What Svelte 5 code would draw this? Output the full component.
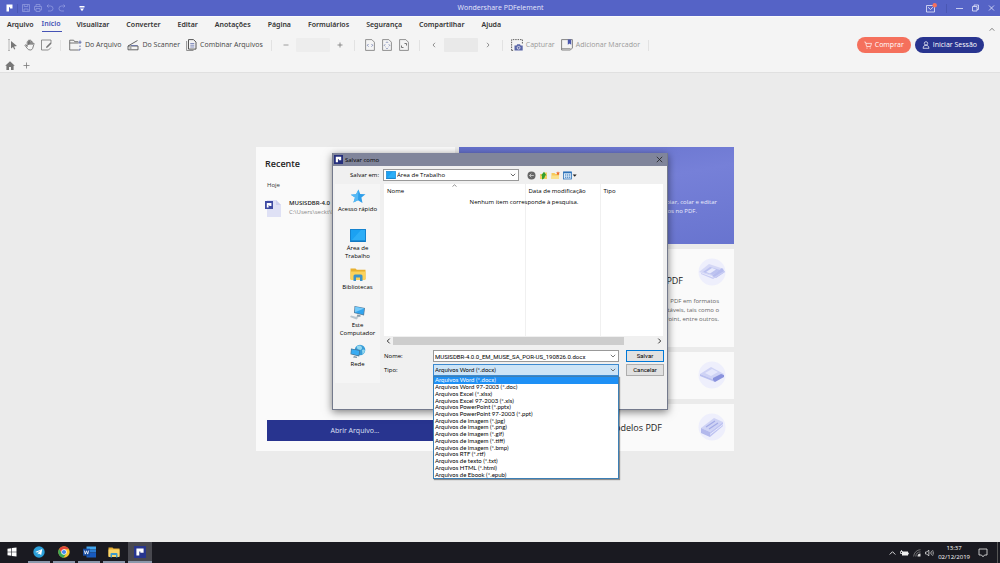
<script>
  const menus = ['Visualizar', 'Converter', 'Editar', 'Anotações', 'Página', 'Formulários', 'Segurança', 'Compartilhar', 'Ajuda'];
  const types = [
    'Arquivos Word (*.docx)',
    'Arquivos Word 97-2003 (*.doc)',
    'Arquivos Excel (*.xlsx)',
    'Arquivos Excel 97-2003 (*.xls)',
    'Arquivos PowerPoint (*.pptx)',
    'Arquivos PowerPoint 97-2003 (*.ppt)',
    'Arquivos de imagem (*.jpg)',
    'Arquivos de imagem (*.png)',
    'Arquivos de imagem (*.gif)',
    'Arquivos de imagem (*.tiff)',
    'Arquivos de imagem (*.bmp)',
    'Arquivos RTF (*.rtf)',
    'Arquivos de texto (*.txt)',
    'Arquivos HTML (*.html)',
    'Arquivos de Ebook (*.epub)'
  ];
  let selected = $state(types[0]);
  let fileName = $state('MUSISDBR-4.0.0_EM_MUSE_SA_POR-US_190826.0.docx');
</script>

{#snippet logo(size, bg)}
  <svg width={size} height={size} viewBox="0 0 10 10" aria-hidden="true">
    <rect width="10" height="10" fill={bg} />
    <path d="M2 2h6v3.700H5.300V4.500H4.400V8H2z" fill="#fff" />
  </svg>
{/snippet}

{#snippet desktop(w, h)}
  <svg width={w} height={h} viewBox="0 0 16 13" aria-hidden="true">
    <rect x=".5" y=".5" width="15" height="12" fill="#1ba1f2" stroke="#1583cf" />
    <path d="M1 12L11 1h4v11z" fill="#35b4fa" opacity=".7" />
    <path d="M1 12h14" stroke="#0c6fb5" />
  </svg>
{/snippet}

<div class="app">
  <header class="titlebar">
    <div class="quick">
      <svg width="7" height="8" viewBox="0 0 7 8" aria-hidden="true"><path d="M.5.5h6v4H4V3.300H3v4.200H.5z" fill="#fff" /></svg>
      <span class="tsep"></span>
      <button aria-label="Salvar arquivo"><svg width="8" height="8" viewBox="0 0 8 8"><path d="M.5.5h7v7h-7zM2.200.5v2h3.600v-2M2 7.500V5h4v2.500" /></svg></button>
      <button aria-label="Imprimir"><svg width="8" height="8" viewBox="0 0 8 8"><path d="M2 2.500v-2h4v2M2 6H.5V2.500h7V6H6M2 4.500h4v3H2z" /></svg></button>
      <button aria-label="Desfazer"><svg width="8" height="8" viewBox="0 0 8 8"><path d="M2.500.5l-1.500 1.500 1.500 1.500M1 2h3.500a2.500 2.500 0 010 5H2" /></svg></button>
      <button aria-label="Refazer"><svg width="8" height="8" viewBox="0 0 8 8"><path d="M5.500.5L7 2 5.500 3.500M7 2H3.500a2.500 2.500 0 000 5H6" /></svg></button>
      <button class="bright" aria-label="Personalizar"><svg width="6" height="7" viewBox="0 0 6 7"><path d="M.5 1h5v1.500h-5zM1 3.500h4L3 6.200z" fill="#fff" stroke="none" /></svg></button>
    </div>
    <h1>Wondershare PDFelement</h1>
    <div class="winctl">
      <button aria-label="Mensagens"><svg width="11" height="10" viewBox="0 0 11 10"><path d="M.5 2.500h8v6.500h-8zM2 4.200l2.500 2.300L7 4.200" /><circle cx="8.700" cy="2.300" r="2.200" fill="#f5705c" stroke="none" /></svg></button>
      <span class="tsep"></span>
      <button aria-label="Minimizar"><svg width="7" height="8" viewBox="0 0 7 8"><path d="M0 4.500h7" /></svg></button>
      <button aria-label="Restaurar"><svg width="7" height="8" viewBox="0 0 7 8"><path d="M.5 2.500h4.500V7H.5zM2 2.500V1h4.500v4.500H5" /></svg></button>
      <button aria-label="Fechar"><svg width="7" height="8" viewBox="0 0 7 8"><path d="M1 1.500l5 5M6 1.500l-5 5" /></svg></button>
    </div>
  </header>

  <nav class="menu">
    <a class="first" href="#arquivo">Arquivo</a>
    <a class="active" href="#inicio">Início</a>
    {#each menus as m}
      <a href="#{m}">{m}</a>
    {/each}
    <button class="collapse" aria-label="Recolher faixa"><svg width="6" height="5" viewBox="0 0 6 5"><path d="M.7 3.700L3 1.300l2.300 2.400" fill="none" stroke="#666" stroke-width=".8" /></svg></button>
  </nav>

  <div class="ribbon">
    <div class="tools">
      <button aria-label="Selecionar"><svg width="11" height="12" viewBox="0 0 11 12"><path d="M1 .5h2M2 .5v11M1 11.500h2" stroke="#aaa" stroke-width=".8" /><path d="M4 2l6 5-3 .4 1.300 2.600-1.100.5L6 7.900 4 9.500z" fill="#777" /></svg></button>
      <button aria-label="Mão"><svg width="11" height="12" viewBox="0 0 11 12"><path d="M3.200 7.500V2.800q.6-.8 1.200 0V6M4.400 5.500V1.300q.7-.8 1.300 0v4.200M5.700 5.500V1.600q.7-.8 1.300 0v4M7 5.500V2.700q.7-.7 1.300 0v2.800l.9-1.300q.9-.4.9.6L8.600 9.500q-.6 1.500-2.300 1.500-2 0-3-1.500L1 6.400q.3-1.100 1.200-.4l1 1.500" stroke="#666" stroke-width=".8" /></svg></button>
      <button aria-label="Editar"><svg width="11" height="12" viewBox="0 0 11 12"><path d="M10 4V1H.5v10h7l2.500-2.500" stroke="#777" stroke-width=".8" /><path d="M5 9l.4-1.600 4-4 1.200 1.200-4 4z" fill="#777" /></svg></button>
    </div>
    <span class="sep"></span>
    <div class="tools">
      <button class="lbl"><svg width="13" height="12" viewBox="0 0 13 12"><path d="M9.500 11H.7V1.200h4l1 1.500h3.500M.7 4h9" stroke="#555" stroke-width=".8" /><path d="M11 11V9.500M11 8V6.500M9.500 11h1.500M11 1.500v3.500M9.500 3.200h3" stroke="#5563a6" stroke-width=".9" /></svg>Do Arquivo</button>
      <button class="lbl"><svg width="12" height="12" viewBox="0 0 12 12"><path d="M1 7L10.500 1.500M1 7h10v3.800H1zM2.500 9h2" stroke="#555" stroke-width=".9" /><path d="M4 6.500h6.500" stroke="#5563a6" stroke-width=".7" /></svg>Do Scanner</button>
      <button class="lbl"><svg width="11" height="12" viewBox="0 0 11 12"><path d="M7.500 11.500H.6V2" stroke="#777" stroke-width=".8" /><path d="M2.500.6h5l2.500 2.500v7h-7.500z" stroke="#444" stroke-width=".9" /><path d="M4.300 4.500h4M4.300 6.200h4M4.300 8h4" stroke="#5563a6" stroke-width=".7" /></svg>Combinar Arquivos</button>
    </div>
    <span class="sep"></span>
    <div class="tools range">
      <button aria-label="Reduzir"><svg width="6" height="6" viewBox="0 0 6 6"><path d="M.5 3h5" stroke="#888" stroke-width=".8" /></svg></button>
      <select class="box" aria-label="Zoom" disabled><option></option></select>
      <button aria-label="Ampliar"><svg width="6" height="6" viewBox="0 0 6 6"><path d="M.5 3h5M3 .5v5" stroke="#777" stroke-width=".8" /></svg></button>
    </div>
    <span class="sep"></span>
    <div class="tools pages">
      <button aria-label="Ajustar largura"><svg width="10" height="12" viewBox="0 0 10 12"><path d="M.6.6h6.200l2.600 2.600v8.200H.6z" stroke="#777" stroke-width=".8" /><path d="M3.500 5L2.300 6.300l1.200 1.300M6.500 5l1.200 1.300-1.200 1.300" stroke="#6b78ad" stroke-width=".8" /></svg></button>
      <button aria-label="Ajustar página"><svg width="10" height="12" viewBox="0 0 10 12"><path d="M.6.6h6.200l2.600 2.600v8.200H.6z" stroke="#777" stroke-width=".8" /><path d="M3.200 5.300l-1 1 1 1M6.800 5.300l1 1-1 1M4 3.800l1-1 1 1M4 8.800l1 1 1-1" stroke="#6b78ad" stroke-width=".8" /></svg></button>
      <button aria-label="Tamanho real"><svg width="10" height="12" viewBox="0 0 10 12"><path d="M.6.6h6.200l2.600 2.600v8.200H.6z" stroke="#777" stroke-width=".8" /><path d="M5.500 4.500h2v2M4.500 8.500h-2v-2" stroke="#555" stroke-width=".8" /></svg></button>
    </div>
    <span class="sep"></span>
    <div class="tools range">
      <button aria-label="Anterior"><svg width="6" height="6" viewBox="0 0 6 6"><path d="M4 .8L2 3l2 2.200" stroke="#777" stroke-width=".8" /></svg></button>
      <input class="box" aria-label="Página atual" disabled />
      <button aria-label="Próxima"><svg width="6" height="6" viewBox="0 0 6 6"><path d="M2 .8L4 3 2 5.200" stroke="#777" stroke-width=".8" /></svg></button>
    </div>
    <span class="sep"></span>
    <div class="tools muted">
      <button class="lbl"><svg width="12" height="12" viewBox="0 0 12 12"><path d="M.6 11.400V.6h10.800v4M.6 11.400H3" stroke="#555" stroke-width=".9" stroke-dasharray="1.500 .9" /><path d="M3.500 6.500h2l.7-1.200h2.800l.7 1.200h2v5h-8.200z" fill="#5a66a8" /><circle cx="7.600" cy="8.800" r="1.400" stroke="#fff" stroke-width=".7" /></svg>Capturar</button>
      <button class="lbl"><svg width="12" height="12" viewBox="0 0 12 12"><path d="M.6.6h10.800v8.400l-2 2H.6z" stroke="#777" stroke-width=".9" /><path d="M.6 9.600h9" stroke="#777" stroke-width=".7" /><path d="M6.800.6h3.400v5.200L8.500 4.600 6.800 5.800z" fill="#4c58ad" /></svg>Adicionar Marcador</button>
    </div>
    <span class="sep"></span>
    <div class="account">
      <button class="pill buy"><svg width="8" height="8" viewBox="0 0 8 8"><path d="M.3 1h1.200L2.600 5.500h4L7.500 2.400H2" stroke="#fff" stroke-width=".7" /><circle cx="3" cy="7" r=".6" fill="#fff" /><circle cx="6.200" cy="7" r=".6" fill="#fff" /></svg>Comprar</button>
      <button class="pill sign"><svg width="8" height="8" viewBox="0 0 8 8"><circle cx="4" cy="2.400" r="1.700" stroke="#fff" stroke-width=".7" /><path d="M1 7.300q.3-2.500 2-3h2q1.700.5 2 3z" stroke="#fff" stroke-width=".7" /></svg>Iniciar Sessão</button>
    </div>
  </div>

  <div class="tabs">
    <button aria-label="Página inicial"><svg width="10" height="9" viewBox="0 0 10 9"><path d="M5 .3L9.800 4.800H8.600V9H6V6H4v3H1.400V4.800H.2L5 .3z" fill="#777" /></svg></button>
    <button aria-label="Nova guia"><svg width="7" height="7" viewBox="0 0 7 7"><path d="M.5 3.500h6M3.500.5v6" stroke="#777" stroke-width=".8" /></svg></button>
  </div>

  <main>
    <div class="home">
      <section class="recent">
        <h2>Recente</h2>
        <h3>Hoje</h3>
        <a class="file" href="#recente">
          <svg width="16" height="18" viewBox="0 0 16 18" aria-hidden="true"><path d="M2 1h9l5 5v12H2z" fill="#dfe1f5" /><path d="M11 1l5 5h-5z" fill="#cdd0ee" /><rect y="2" width="8" height="8" fill="#3f4ba3" /><path d="M1.800 4h4.600v3H4.200V6H3.600v2.500H1.800z" fill="#fff" /></svg>
          <span><b>MUSISDBR-4.0</b><small>C:\Users\seckt\D</small></span>
        </a>
        <button class="open">Abrir Arquivo...</button>
      </section>
      <section class="cards">
        <a class="card edit" href="#editar"><p>copiar, colar e editar<br /><span class="short">textos no PDF.</span></p></a>
        <a class="card convert" href="#converter">
          <h2>PDF</h2>
          <p>PDF em formatos<br />editáveis, tais como o<br />PowerPoint, entre outros.</p>
          <svg width="28" height="28" viewBox="0 0 28 28" aria-hidden="true"><circle cx="14" cy="14" r="13.500" fill="#eeeffc" /><path d="M1 14l10-8 15 5-9 8z" fill="#d5d8f6" /><path d="M5 14l7-5 10 3-7 5z" fill="#bcc2f0" /><path d="M8 14l6-4 4 1.500-6 4z" fill="#e8eafc" /><path d="M14 18l10-8 3 4-9 6z" fill="#b6bcee" /><path d="M3 15l12 4.500L26 13v1.500L15 21 3 16z" fill="#c9cdf4" /></svg>
        </a>
        <a class="card" href="#combinar" aria-label="Combinar">
          <svg width="28" height="28" viewBox="0 0 28 28" aria-hidden="true"><circle cx="14" cy="14" r="13.500" fill="#eeeffc" /><path d="M2 13l11-7 13 7-9 6z" fill="#cfd3f5" /><path d="M7 12l7-4 6 3-7 4z" fill="#e6e8fc" /><path d="M2 13l15 6v2L2 15z" fill="#bac0ef" /><path d="M15 17l8-4 3 1v2l-9 5-2-2z" fill="#8a93dd" /></svg>
        </a>
        <a class="card" href="#modelos">
          <h2 class="wide">Modelos PDF</h2>
          <svg width="28" height="28" viewBox="0 0 28 28" aria-hidden="true"><circle cx="14" cy="14" r="13.500" fill="#eeeffc" /><path d="M3 15L16 5l9 4-13 10z" fill="#cfd3f5" /><path d="M3 15l9 4v5l-9-4z" fill="#b3b9ec" /><path d="M12 19L25 9v4L12 24z" fill="#bfc4f2" /><path d="M8 14l9-6M11 16l9-6" stroke="#a3abe6" stroke-width="1.200" /><path d="M12 21.500L25 11.500" stroke="#e8eafc" /></svg>
        </a>
      </section>
    </div>

    <div class="dialog" role="dialog" aria-label="Salvar como">
      <div class="dtitle">{@render logo(9, '#252f7c')}<span>Salvar como</span>
        <button aria-label="Fechar janela"><svg width="7" height="7" viewBox="0 0 7 7"><path d="M.8.8l5.400 5.400M6.200.8L.8 6.200" stroke="#222" stroke-width=".8" /></svg></button>
      </div>
      <div class="look">
        <label for="folder">Salvar em:</label>
        <div class="combo">
          {@render desktop(10, 8)}
          <select id="folder"><option>Área de Trabalho</option></select>
          <svg class="arrow" width="6" height="4" viewBox="0 0 6 4"><path d="M.8.8L3 3 5.200.8" stroke="#444" stroke-width=".8" /></svg>
        </div>
        <div class="ltools">
          <button aria-label="Voltar"><svg width="9" height="9" viewBox="0 0 9 9"><circle cx="4.500" cy="4.500" r="4" fill="#666" /><path d="M6.800 4.500H2.500M4.300 2.700L2.500 4.500l1.800 1.800" stroke="#ccc" stroke-width=".9" /></svg></button>
          <button aria-label="Um nível acima"><svg width="9" height="9" viewBox="0 0 9 9"><path d="M1 3h3l1-1.500h3V8H1z" fill="#f3cf63" /><path d="M3 8V4.500H2L5 .7l2.500 3.800H6Q6 7.500 3 8.500z" fill="#35a02c" /></svg></button>
          <button aria-label="Nova pasta"><svg width="9" height="9" viewBox="0 0 9 9"><path d="M.5 2h3l1 1H8v5H.5z" fill="#f6c95a" /><path d="M.5 4.500H8V8H.5z" fill="#fae08d" /><path d="M7 .3l.6 1.100L9 1.600l-1 1 .2 1.400L7 3.400l-1.200.6.2-1.400-1-1 1.400-.2z" fill="#ee6c2c" /></svg></button>
          <button aria-label="Exibir"><svg width="14" height="9" viewBox="0 0 14 9"><rect x=".5" y="1" width="8" height="7" fill="#dcecfa" stroke="#2b71b8" stroke-width=".8" /><path d="M.5 1.500h8" stroke="#2b71b8" stroke-width="1.500" /><path d="M2 4h1.300M4 4h1.300M6 4h1.300M2 6.200h1.300M4 6.200h1.300M6 6.200h1.300" stroke="#2b71b8" /><path d="M9.700 3.500h4l-2 2.300z" fill="#222" /></svg></button>
        </div>
      </div>
      <div class="dbody">
        <div class="places">
          <button><svg width="16" height="15" viewBox="0 0 16 15"><path d="M8.500.5l1.700 4.400 5.300.3-4.100 3.300 1.100 5.600-4.600-2.900-4.500 2.300 1.600-4.900L.8 5.700l5.200-.5z" fill="#2f9fea" /><path d="M8.500.5L8 11.200l-4.600 2.300L5 8.600.8 5.700 6 5.200z" fill="#55b9f5" /></svg>Acesso rápido</button>
          <button>{@render desktop(16, 15)}Área de Trabalho</button>
          <button><svg width="16" height="15" viewBox="0 0 16 15"><path d="M.5 1.500h5l1.300 1.300h8.700V12H.5z" fill="#e8b02f" /><path d="M.5 4.500h15V13H.5z" fill="#fbd25b" /><path d="M3.500 14V9q0-1.500 1.500-1.500h6q1.500 0 1.500 1.500v5H10v-3.500H6V14z" fill="#3d93c9" /></svg>Bibliotecas</button>
          <button><svg width="16" height="15" viewBox="0 0 16 15"><path d="M4.500 1l10.500 2-1 7.500L4 8z" fill="#5a7f9c" /><path d="M5.200 1.700l9 1.800-.8 6L4.800 7.400z" fill="#31a4ee" /><path d="M5.200 1.700l9 1.800-9.200 3.700z" fill="#76cbfa" /><path d="M7.500 9.500l3 .7v1.500h-4z" fill="#8599a6" /><path d="M1 10.500l7.500 2-2 2L0 12z" fill="#b8c5ce" /></svg>Este Computador</button>
          <button><svg width="16" height="15" viewBox="0 0 16 15"><circle cx="10" cy="6" r="5.300" fill="#3a9ed8" /><path d="M6.500 2.500q3.500-2 5 0t-1 3.500l-3-1zM12 6q2-1 3 .5-.5 3-2.500 3.800z" fill="#93d7ef" /><path d="M1 4.500l9 1.700-.8 6.300L.5 10.300z" fill="#47718f" /><path d="M1.600 5.300l7.700 1.500-.7 4.800L1.200 9.800z" fill="#39acf3" /><path d="M4 12l3 .7v1.300l-4-.4z" fill="#8599a6" /></svg>Rede</button>
        </div>
        <div class="right">
          <div class="pane">
            <svg class="sort" width="5" height="3" viewBox="0 0 5 3"><path d="M.5 2.500l2-1.700 2 1.700" stroke="#666" stroke-width=".7" /></svg>
            <table>
              <thead><tr><th class="c1">Nome</th><th class="c2">Data de modificação</th><th>Tipo</th></tr></thead>
              <tbody><tr><td></td><td></td><td></td></tr></tbody>
            </table>
            <p class="empty">Nenhum item corresponde à pesquisa.</p>
          </div>
          <div class="scroll">
            <button aria-label="Rolar à esquerda"><svg width="5" height="6" viewBox="0 0 5 6"><path d="M3.700.6L1.300 3l2.400 2.400" stroke="#333" /></svg></button>
            <span class="track"><span class="thumb"></span></span>
            <button aria-label="Rolar à direita"><svg width="5" height="6" viewBox="0 0 5 6"><path d="M1.300.6L3.700 3 1.300 5.400" stroke="#333" /></svg></button>
          </div>
          <div class="form">
            <label for="fname">Nome:</label>
            <div class="field">
              <input id="fname" bind:value={fileName} />
              <svg class="arrow" width="6" height="4" viewBox="0 0 6 4"><path d="M.8.8L3 3 5.200.8" stroke="#555" stroke-width=".8" /></svg>
            </div>
            <button class="btn default">Salvar</button>
            <label for="ftype">Tipo:</label>
            <div class="field type">
              <select id="ftype" bind:value={selected}>
                {#each types as t}<option>{t}</option>{/each}
              </select>
              <svg class="arrow" width="6" height="4" viewBox="0 0 6 4"><path d="M.8.8L3 3 5.200.8" stroke="#555" stroke-width=".8" /></svg>
              <div class="list" role="listbox" aria-label="Tipo">
                {#each types as t}
                  <button role="option" aria-selected={t === selected} class:on={t === selected} onclick={() => (selected = t)}>{t}</button>
                {/each}
              </div>
            </div>
            <button class="btn">Cancelar</button>
          </div>
        </div>
      </div>
    </div>
  </main>

  <footer class="taskbar">
    <button class="task start" aria-label="Iniciar"><svg width="10" height="10" viewBox="0 0 10 10"><path d="M.5 1.800l3.800-.6v3.500H.5zM4.900 1.100L9.500.4v4.300H4.900zM.5 5.300h3.800v3.500L.5 8.200zM4.900 5.300h4.600v4.300l-4.600-.7z" fill="#fff" /></svg></button>
    <button class="task run" aria-label="Telegram"><svg width="12" height="12" viewBox="0 0 12 12"><circle cx="6" cy="6" r="5.700" fill="#2ba0da" /><path d="M2.200 6L9.300 3.100 8.200 9 5.800 7.400 4.800 8.500V6.900L8 4.200 4 6.600z" fill="#fff" /></svg></button>
    <button class="task run" aria-label="Chrome"><svg width="12" height="12" viewBox="0 0 12 12"><circle cx="6" cy="6" r="5.700" fill="#f7c52f" /><path d="M1.100 3.100A5.700 5.700 0 0111 3.300H6L3.700 7.300z" fill="#e2453a" /><path d="M1.100 3.100A5.700 5.700 0 005.500 11.700L8.200 7.500 3.700 7.300z" fill="#3aa757" /><circle cx="6" cy="6" r="2.700" fill="#fff" /><circle cx="6" cy="6" r="2.100" fill="#4286f2" /></svg></button>
    <button class="task run" aria-label="Word"><svg width="13" height="12" viewBox="0 0 13 12"><path d="M3.500.5H13v3H3.500z" fill="#41a5ee" /><path d="M3.500 3.500H13v3H3.500z" fill="#2b7cd3" /><path d="M3.500 6.500H13v5H3.500z" fill="#185abd" /><rect y="2.700" width="7" height="7" fill="#164a9e" /><path d="M1.300 4.500l1 3.600 1.200-3.300 1.200 3.300 1-3.600" stroke="#fff" stroke-width=".8" /></svg></button>
    <button class="task run" aria-label="Explorador"><svg width="12" height="12" viewBox="0 0 12 12"><path d="M.5 1.500h4l1 1h6V10H.5z" fill="#e5ac32" /><path d="M.5 3.500h11V11H.5z" fill="#fad66b" /><path d="M2.500 11.500V8q0-1 1-1h5q1 0 1 1v3.500H8V9H4v2.500z" fill="#3e9acb" /></svg></button>
    <button class="task run current" aria-label="PDFelement">{@render logo(12, '#28368f')}</button>
    <div class="tray">
      <button aria-label="Ícones ocultos"><svg width="7" height="8" viewBox="0 0 7 8"><path d="M.7 5.500L3.500 2.700l2.800 2.800" stroke="#eee" stroke-width=".9" /></svg></button>
      <button aria-label="Bateria"><svg width="9" height="8" viewBox="0 0 9 8"><rect x="2" y="2.500" width="6" height="4" fill="#eee" /><path d="M8.500 3.700v1.600M.5 2.500h2v2h-2zM1.500 1v1.500" stroke="#eee" stroke-width=".8" /></svg></button>
      <button aria-label="Rede sem fio"><svg width="8" height="8" viewBox="0 0 8 8"><path d="M.7 7.500a7 7 0 016.800-6.800M2.800 7.500a4.800 4.800 0 014.700-4.600" stroke="#999" stroke-width=".7" /><path d="M4.500 7.500a3 3 0 013-3v3z" fill="#ddd" /></svg></button>
      <button aria-label="Volume"><svg width="9" height="8" viewBox="0 0 9 8"><path d="M.5 3h1.300L3.800 1v6L1.800 5H.5z" stroke="#eee" stroke-width=".7" /><path d="M5 2.800q.8 1.200 0 2.400M6.300 1.900q1.500 2.100 0 4.200M7.500 1q2.200 3 0 6" stroke="#ccc" stroke-width=".6" /></svg></button>
      <time>13:37<br />02/12/2019</time>
      <button aria-label="Notificações"><svg width="10" height="10" viewBox="0 0 10 10"><path d="M1 1h8v6H6.500L5 8.800 3.500 7H1z" stroke="#eee" stroke-width=".8" /></svg></button>
      <span class="peek"></span>
    </div>
  </footer>
</div>

<style>
  .app { display: flex; flex-direction: column; min-height: 100vh; background: #ebebeb; color: #333; font: 7px/10px 'Open Sans', 'Noto Sans', sans-serif; }
  .app * { box-sizing: border-box; }
  button, input, select { font: inherit; color: inherit; border: 0; margin: 0; padding: 0; background: none; appearance: none; outline: 0; }
  button { display: flex; align-items: center; justify-content: center; }
  a { color: inherit; text-decoration: none; }
  svg { display: block; flex: none; fill: none; }
  h1, h2, h3, p { margin: 0; font-weight: 400; }

  .titlebar { display: grid; grid-template-columns: 1fr auto 1fr; align-items: center; height: 16px; padding: 0 5px 0 6px; background: #5563c6; color: #e6e8fa; }
  .titlebar h1 { font-size: 7px; }
  .titlebar svg { stroke: #8f99de; stroke-width: .8; }
  .quick { display: flex; align-items: center; gap: 4px; }
  .quick > svg { stroke: none; }
  .quick .bright { margin-left: 9px; }
  .tsep { width: 1px; height: 9px; background: #4a57b3; }
  .winctl { display: flex; align-items: center; justify-content: flex-end; gap: 9px; }
  .winctl svg { stroke: #e6e8fa; }

  .menu { display: flex; align-items: center; gap: 17px; height: 16px; padding: 0 5px 0 7px; background: #f4f4f4; font-family: 'Noto Sans', 'Open Sans', sans-serif; font-weight: 600; border-top: 1px solid #fbfbfb; }
  .menu .first { margin-right: -9px; }
  .menu a { line-height: 14px; }
  .menu .active { color: #4553b5; border-bottom: 1px solid #4553b5; padding-right: 2px; margin-right: -3px; }
  .collapse { margin-left: auto; align-self: flex-end; }

  .ribbon { display: flex; align-items: center; height: 26px; padding: 0 16px 0 7px; background: #f4f4f4; color: #444; }
  .tools { display: flex; align-items: center; gap: 6px; }
  .sep { width: 1px; height: 11px; background: #e2e2e2; margin: 0 8px; }
  .lbl { gap: 3px; white-space: nowrap; }
  .box { width: 34px; height: 14px; background: #e9e9e9; border-radius: 1px; }
  .range { padding: 0 3px; gap: 7px; }
  .pages { gap: 7px; padding: 0 2px; }
  .muted { color: #999; }
  .account { display: flex; gap: 4px; margin-left: auto; color: #fff; }
  .pill { height: 16px; padding: 0 7px; gap: 3px; border-radius: 8px; white-space: nowrap; }
  .buy { background: #f5705c; }
  .sign { background: #28348f; }

  .tabs { display: flex; align-items: center; gap: 8px; height: 15px; padding: 0 5px; background: #f4f4f4; border-bottom: 1px solid #e0e0e0; }

  main { position: relative; flex: 1; padding: 74px 10px 0 0; }
  .home { display: grid; grid-template-columns: 199px 275px; gap: 4px; justify-content: center; }
  .recent { display: flex; flex-direction: column; background: #fafafa; padding: 11px 0 10px 9px; }
  .recent h2 { font-size: 9px; line-height: 12px; font-weight: 600; color: #222; }
  .recent h3 { font-size: 6px; margin: 10px 0 9px 2px; }
  .file { display: flex; gap: 8px; white-space: nowrap; }
  .file b, .file small { display: block; font-size: 6px; line-height: 9px; }
  .file b { font-weight: 600; color: #222; }
  .file small { color: #888; }
  .open { margin-top: auto; height: 21px; margin-left: 2px; margin-right: 12px; background: #28348f; color: #dfe1f4; }

  .cards { display: grid; grid-template-rows: 97px 98px 47px 47px; gap: 5px; text-align: right; }
  .card { position: relative; display: flex; flex-direction: column; justify-content: center; background: #fafafa; }
  .card h2 { font-size: 9px; color: #222; padding-right: 51px; font-weight: 400; }
  .card .wide { padding-right: 72px; }
  .card p { font-size: 6px; line-height: 9px; padding-right: 15px; color: #666; }
  .card svg { position: absolute; right: 8px; top: 9px; }
  .edit { background: linear-gradient(170deg, #6470cb, #7680d8 45%, #6874cf); }
  .edit p { color: #e9ebfb; padding-right: 17px; padding-top: 22px; }
  .short { padding-right: 20px; }
  .convert { justify-content: flex-start; padding-top: 27px; }
  .convert p { padding-top: 11px; }

  .dialog { position: absolute; top: 80px; left: 50%; width: 336px; height: 257px; transform: translateX(-50%); background: #f0f0f0; border: 1px solid #747a8c; border-top: 0; box-shadow: 0 2px 8px rgba(0, 0, 0, .5); color: #000; font-size: 6px; line-height: 8px; }
  .dtitle { display: flex; align-items: center; gap: 2px; height: 13px; padding: 0 4px 0 1px; background: #80859b; }
  .dtitle button { margin-left: auto; }
  .look { display: flex; align-items: center; height: 18px; gap: 4px; }
  .look label { width: 46px; text-align: right; }
  .combo { position: relative; display: flex; align-items: center; gap: 1px; width: 136px; height: 12px; padding: 0 2px; background: #fff; border: 1px solid #999; }
  .combo select { flex: 1; height: 10px; }
  .arrow { position: absolute; right: 2px; top: 3px; pointer-events: none; }
  .ltools { display: flex; gap: 3px; padding-left: 4px; }
  .dbody { display: grid; grid-template-columns: 45px 1fr; gap: 4px; padding: 0 3px 0 2px; }
  .places { display: flex; flex-direction: column; background: #f5f5f5; height: 199px; padding-top: 5px; }
  .places button { flex-direction: column; justify-content: flex-start; gap: 1px; height: 39px; }
  .right { min-width: 0; }
  .pane { position: relative; background: #fff; height: 152px; }
  table { width: 100%; height: 100%; border-collapse: collapse; table-layout: fixed; }
  thead tr { height: 14px; }
  th { text-align: left; font-weight: 400; padding: 0 3px; white-space: nowrap; }
  th, td { border-right: 1px solid #f0f0f0; }
  .c1 { width: 141px; }
  .c2 { width: 75px; }
  .sort { position: absolute; left: 68px; top: 0; }
  .empty { position: absolute; top: 14px; left: 0; right: 0; text-align: center; }
  .scroll { display: flex; align-items: center; gap: 2px; height: 10px; padding: 0 2px; }
  .track { flex: 1; height: 8px; }
  .thumb { display: block; width: 88%; height: 8px; background: #cdcdcd; }
  .form { display: grid; grid-template-columns: 49px 1fr 38px; row-gap: 2px; align-items: center; padding-top: 4px; }
  .field { position: relative; height: 12px; margin-right: 7px; border: 1px solid #999; background: #fff; font-family: Roboto, 'Liberation Sans', sans-serif; }
  .field input, .field select { width: 100%; height: 10px; padding-left: 1px; }
  .type { background: #cce4f7; border-color: #3c8ad0; font-family: Lato, 'Liberation Sans', sans-serif; }
  .btn { height: 12px; background: #e1e1e1; border: 1px solid #adadad; font-family: Roboto, 'Liberation Sans', sans-serif; }
  .default { border-color: #0078d7; }
  .list { position: absolute; z-index: 2; top: 11px; left: -1px; right: -1px; height: 103px; display: grid; grid-auto-rows: 1fr; background: #fff; border: 1px solid #3c7fb5; box-shadow: 1px 1px 1px rgba(0, 0, 0, .4); }
  .list button { justify-content: flex-start; padding-left: 1px; line-height: 6px; min-height: 0; white-space: nowrap; }
  .list .on { background: #1e90f5; color: #fff; }

  .taskbar { display: flex; height: 21px; padding-left: 2px; gap: 3px; background: #1a1a21; color: #fff; }
  .task { width: 22px; border-bottom: 2px solid transparent; }
  .start { margin-right: 3px; width: 20px; }
  .run { border-color: #8b98ab; }
  .current { background: #48484f; width: 24px; }
  .tray { display: flex; align-items: center; gap: 4px; margin-left: auto; }
  time { font-size: 6px; line-height: 9px; text-align: center; }
  .tray time + button { margin: 0 5px 0 4px; }
  .peek { width: 3px; height: 21px; border-left: 1px solid #555; }
</style>
